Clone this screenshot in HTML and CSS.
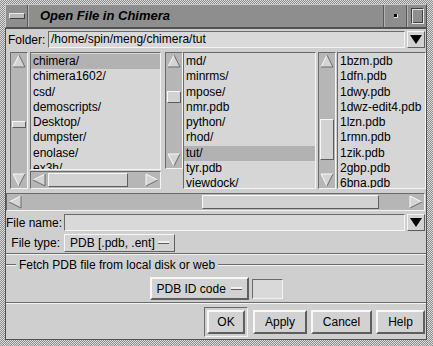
FILE: index.html
```html
<!DOCTYPE html>
<html>
<head>
<meta charset="utf-8">
<link rel="stylesheet" href="styles.css">
</head>
<body>
<div class="window">
  <div class="titlebar">
    <div class="tb menu"><span class="menubar"></span></div>
    <div class="title">Open File in Chimera</div>
    <div class="tb min"><span class="dot"></span></div>
    <div class="tb max"><span class="sq"></span></div>
  </div>
  <div class="dialog">
    <div class="row folder-row">
      <span class="lbl folder-lbl">Folder:</span>
      <div class="field">/home/spin/meng/chimera/tut</div>
      <div class="dropbtn"><span class="tri"></span></div>
    </div>

    <div class="lists">
      <div class="vscroll tall">
        <svg class="arr" width="14" height="14" viewBox="0 0 14 14"><polygon points="1,13 7,1 13,13" fill="#d4d4d4"/><path d="M1 13 L7 1" stroke="#fafafa" fill="none"/><path d="M7 1 L13 13 L1 13" stroke="#6a6a6a" fill="none"/></svg>
        <div class="track"><div class="thumb" style="margin-top:53px;height:7px"></div></div>
        <svg class="arr" width="14" height="14" viewBox="0 0 14 14"><polygon points="1,1 13,1 7,13" fill="#d4d4d4"/><path d="M1 1 L13 1 M1 1 L7 13" stroke="#fafafa" fill="none"/><path d="M13 1 L7 13" stroke="#6a6a6a" fill="none"/></svg>
      </div>
      <div class="leftcol">
        <div class="list left">
          <div class="item sel">chimera/</div>
          <div class="item">chimera1602/</div>
          <div class="item">csd/</div>
          <div class="item">demoscripts/</div>
          <div class="item">Desktop/</div>
          <div class="item">dumpster/</div>
          <div class="item">enolase/</div>
          <div class="item">ex3h/</div>
        </div>
        <div class="hscroll small">
          <svg class="arr" width="14" height="14" viewBox="0 0 14 14"><polygon points="13,1 13,13 1,7" fill="#d4d4d4"/><path d="M13 1 L1 7" stroke="#fafafa" fill="none"/><path d="M1 7 L13 13 L13 1" stroke="#6a6a6a" fill="none"/></svg>
          <div class="htrack"><div class="thumb" style="margin-left:2px;width:80px"></div></div>
          <svg class="arr" width="14" height="14" viewBox="0 0 14 14"><polygon points="1,1 13,7 1,13" fill="#d4d4d4"/><path d="M1 13 L1 1 L13 7" stroke="#fafafa" fill="none"/><path d="M13 7 L1 13" stroke="#6a6a6a" fill="none"/></svg>
        </div>
      </div>

      <div class="vscroll short">
        <svg class="arr" width="14" height="14" viewBox="0 0 14 14"><polygon points="1,13 7,1 13,13" fill="#d4d4d4"/><path d="M1 13 L7 1" stroke="#fafafa" fill="none"/><path d="M7 1 L13 13 L1 13" stroke="#6a6a6a" fill="none"/></svg>
        <div class="track"><div class="thumb" style="margin-top:23px;height:12px"></div></div>
        <svg class="arr" width="14" height="14" viewBox="0 0 14 14"><polygon points="1,1 13,1 7,13" fill="#d4d4d4"/><path d="M1 1 L13 1 M1 1 L7 13" stroke="#fafafa" fill="none"/><path d="M13 1 L7 13" stroke="#6a6a6a" fill="none"/></svg>
      </div>
      <div class="list mid">
        <div class="item">md/</div>
        <div class="item">minrms/</div>
        <div class="item">mpose/</div>
        <div class="item">nmr.pdb</div>
        <div class="item">python/</div>
        <div class="item">rhod/</div>
        <div class="item sel">tut/</div>
        <div class="item">tyr.pdb</div>
        <div class="item">viewdock/</div>
      </div>

      <div class="vscroll tall rightbar">
        <svg class="arr" width="14" height="14" viewBox="0 0 14 14"><polygon points="1,13 7,1 13,13" fill="#d4d4d4"/><path d="M1 13 L7 1" stroke="#fafafa" fill="none"/><path d="M7 1 L13 13 L1 13" stroke="#6a6a6a" fill="none"/></svg>
        <div class="track"><div class="thumb" style="margin-top:51px;height:41px"></div></div>
        <svg class="arr" width="14" height="14" viewBox="0 0 14 14"><polygon points="1,1 13,1 7,13" fill="#d4d4d4"/><path d="M1 1 L13 1 M1 1 L7 13" stroke="#fafafa" fill="none"/><path d="M13 1 L7 13" stroke="#6a6a6a" fill="none"/></svg>
      </div>
      <div class="list right">
        <div class="item">1bzm.pdb</div>
        <div class="item">1dfn.pdb</div>
        <div class="item">1dwy.pdb</div>
        <div class="item">1dwz-edit4.pdb</div>
        <div class="item">1lzn.pdb</div>
        <div class="item">1rmn.pdb</div>
        <div class="item">1zik.pdb</div>
        <div class="item">2gbp.pdb</div>
        <div class="item">6bna.pdb</div>
      </div>
    </div>

    <div class="hscroll big">
      <svg class="arr" width="14" height="14" viewBox="0 0 14 14"><polygon points="13,1 13,13 1,7" fill="#d4d4d4"/><path d="M13 1 L1 7" stroke="#fafafa" fill="none"/><path d="M1 7 L13 13 L13 1" stroke="#6a6a6a" fill="none"/></svg>
      <div class="htrack"><div class="thumb" style="margin-left:180px;width:177px"></div></div>
      <svg class="arr" width="14" height="14" viewBox="0 0 14 14"><polygon points="1,1 13,7 1,13" fill="#d4d4d4"/><path d="M1 13 L1 1 L13 7" stroke="#fafafa" fill="none"/><path d="M13 7 L1 13" stroke="#6a6a6a" fill="none"/></svg>
    </div>

    <div class="row name-row">
      <span class="lbl rlbl">File name:</span>
      <div class="field"></div>
      <div class="dropbtn"><span class="tri"></span></div>
    </div>
    <div class="row type-row">
      <span class="lbl rlbl">File type:</span>
      <div class="optbtn typebtn">PDB [.pdb, .ent]<span class="dash"></span></div>
    </div>

    <div class="sep"></div>

    <div class="fetch">
      <div class="fetch-head">
        <span class="line short-line"></span>
        <span class="fetch-title">Fetch PDB file from local disk or web</span>
        <span class="line grow-line"></span>
      </div>
      <div class="fetch-body">
        <div class="optbtn idbtn">PDB ID code<span class="dash"></span></div>
        <div class="field idfield"></div>
      </div>
    </div>

    <div class="buttons">
      <div class="defring"><div class="btn okbtn">OK</div></div>
      <div class="btn applybtn">Apply</div>
      <div class="btn cancelbtn">Cancel</div>
      <div class="btn helpbtn">Help</div>
    </div>
  </div>
</div>
</body>
</html>
```

FILE: styles.css
```css
html, body {
  margin: 0;
  padding: 0;
  background: #bdbdbd;
}

.window {
  width: 433px;
  height: 346px;
  box-sizing: border-box;
  padding: 4px 6px 6px 5px;
  background: repeating-conic-gradient(#8c8c8c 0 25%, #dcdcdc 0 50%) 0 0 / 2px 2px;
  display: flex;
  flex-direction: column;
  font-family: "Liberation Sans", Arial, sans-serif;
  font-size: 12px;
  color: #000;
}

/* ---------- title bar ---------- */
.titlebar {
  height: 24px;
  box-sizing: border-box;
  display: flex;
  background: #8e8e8e;
  border: 1px solid;
  border-color: #c8c8c8 #505050 #505050 #c8c8c8;
}

.tb {
  display: flex;
  align-items: center;
  justify-content: center;
  box-sizing: border-box;
}

.menu {
  width: 22px;
  border-right: 1px solid #5a5a5a;
  box-shadow: 1px 0 0 #b4b4b4;
}

.menubar {
  width: 14px;
  height: 4px;
  background: #b8b8b8;
  border: 1px solid;
  border-color: #e8e8e8 #404040 #404040 #e8e8e8;
}

.title {
  flex: 1;
  padding-left: 12px;
  font-weight: bold;
  font-style: italic;
  font-size: 13px;
  line-height: 22px;
  color: #000;
  border-right: 1px solid #5a5a5a;
  box-shadow: inset 1px 0 0 #b4b4b4;
}

.min {
  width: 23px;
  border-left: 1px solid #b4b4b4;
  border-right: 1px solid #5a5a5a;
}

.dot {
  width: 3px;
  height: 3px;
  background: #000;
  border-right: 1px solid #e0e0e0;
  border-bottom: 1px solid #e0e0e0;
}

.max {
  width: 19px;
  border-left: 1px solid #b4b4b4;
}

.sq {
  width: 11px;
  height: 14px;
  border: 1px solid;
  border-color: #404040 #e8e8e8 #e8e8e8 #404040;
  box-shadow: inset 1px 1px 0 #e0e0e0, inset -1px -1px 0 #404040;
}

/* ---------- dialog ---------- */
.dialog {
  flex: 1;
  background: #cfcfcf;
  border: 1px solid #505050;
  display: flex;
  flex-direction: column;
  box-sizing: border-box;
}

.row {
  display: flex;
  align-items: center;
}

.lbl {
  white-space: nowrap;
}

.field {
  box-sizing: border-box;
  background: #d9d9d9;
  border: 1px solid;
  border-color: #6a6a6a #f4f4f4 #f4f4f4 #6a6a6a;
  line-height: 15px;
  padding-left: 2px;
  white-space: nowrap;
}

.dropbtn {
  width: 18px;
  height: 17px;
  box-sizing: border-box;
  background: #d2d2d2;
  border: 1px solid;
  border-color: #f4f4f4 #5e5e5e #5e5e5e #f4f4f4;
  display: flex;
  align-items: center;
  justify-content: center;
  margin-left: 2px;
}

.tri {
  width: 0;
  height: 0;
  border-left: 6px solid transparent;
  border-right: 6px solid transparent;
  border-top: 9px solid #000;
}

.folder-row {
  margin-top: 1px;
  height: 19px;
  padding-left: 2px;
  padding-right: 1px;
}

.folder-lbl {
  width: 40px;
}

.folder-row .field {
  flex: 1;
  height: 17px;
}

/* ---------- lists ---------- */
.lists {
  margin-top: 3px;
  height: 137px;
  display: flex;
  padding-left: 4px;
}

.vscroll {
  width: 18px;
  box-sizing: border-box;
  background: #b6b6b6;
  border: 1px solid;
  border-color: #6a6a6a #f4f4f4 #f4f4f4 #6a6a6a;
  display: flex;
  flex-direction: column;
  align-items: center;
  padding: 1px 0;
}

.vscroll.tall {
  height: 137px;
}

.vscroll.short {
  height: 117px;
  margin-left: 4px;
}

.vscroll.rightbar {
  margin-left: 2px;
}

.arr {
  display: block;
  flex: none;
}

.track {
  flex: 1;
  width: 14px;
  display: flex;
  flex-direction: column;
}

.thumb {
  box-sizing: border-box;
  background: #d2d2d2;
  border: 1px solid;
  border-color: #f8f8f8 #5e5e5e #5e5e5e #f8f8f8;
  flex: none;
}

.track .thumb {
  width: 14px;
}

.hscroll {
  height: 18px;
  box-sizing: border-box;
  background: #b6b6b6;
  border: 1px solid;
  border-color: #6a6a6a #f4f4f4 #f4f4f4 #6a6a6a;
  display: flex;
  align-items: center;
  padding: 0 1px;
}

.htrack {
  flex: 1;
  height: 14px;
  display: flex;
}

.htrack .thumb {
  height: 14px;
}

.leftcol {
  width: 131px;
  margin-left: 2px;
  display: flex;
  flex-direction: column;
}

.list {
  box-sizing: border-box;
  background: #d6d6d6;
  border: 1px solid;
  border-color: #6a6a6a #f4f4f4 #f4f4f4 #6a6a6a;
  padding-top: 1px;
  overflow: hidden;
}

.list.left {
  height: 118px;
  margin-bottom: 1px;
}

.list.mid {
  width: 133px;
  height: 137px;
}

.list.right {
  width: 89px;
  height: 137px;
  margin-left: 1px;
}

.item {
  line-height: 15.25px;
  height: 15.25px;
  padding-left: 2px;
  white-space: nowrap;
}

.item.sel {
  background: #b2b2b2;
}

.hscroll.big {
  margin: 4px 1px 0 0;
}

/* ---------- file name / type ---------- */
.name-row {
  margin-top: 2px;
  height: 19px;
  padding-right: 1px;
}

.rlbl {
  width: 54px;
  text-align: right;
  margin-right: 4px;
}

.name-row .field {
  flex: 1;
  height: 17px;
}

.type-row {
  margin-top: 1px;
  height: 19px;
}

.optbtn {
  box-sizing: border-box;
  background: #d2d2d2;
  border: 1px solid;
  border-color: #f8f8f8 #5e5e5e #5e5e5e #f8f8f8;
  display: flex;
  align-items: center;
  white-space: nowrap;
}

.typebtn {
  width: 111px;
  height: 18px;
  padding-left: 5px;
}

.dash {
  display: block;
  width: 11px;
  height: 2px;
  background: #f0f0f0;
  border-bottom: 1px solid #5e5e5e;
  margin-left: auto;
  margin-right: 5px;
}

.sep {
  margin-top: 1px;
  height: 0;
  border-top: 1px solid #6a6a6a;
  border-bottom: 1px solid #f4f4f4;
}

/* ---------- fetch frame ---------- */
.fetch {
  height: 45px;
  box-sizing: border-box;
  margin-top: 3px;
  display: flex;
  flex-direction: column;
  border-bottom: 1px solid #6a6a6a;
}

.fetch-head {
  display: flex;
  align-items: center;
  height: 14px;
}

.line {
  display: block;
  height: 0;
  border-top: 1px solid #6a6a6a;
  border-bottom: 1px solid #f4f4f4;
}

.short-line {
  width: 10px;
}

.grow-line {
  flex: 1;
  margin-right: 2px;
}

.fetch-title {
  padding: 0 3px;
  white-space: nowrap;
}

.fetch-body {
  display: flex;
  justify-content: center;
  align-items: center;
  margin-top: 5px;
  gap: 3px;
}

.idbtn {
  width: 99px;
  height: 23px;
  padding-left: 5px;
  border-width: 2px;
  border-color: #f8f8f8 #5e5e5e #5e5e5e #f8f8f8;
}

.idfield {
  width: 31px;
  height: 20px;
}

/* ---------- buttons ---------- */
.buttons {
  flex: 1;
  border-top: 1px solid #f4f4f4;
  display: flex;
  justify-content: flex-end;
  align-items: center;
  gap: 4px;
  padding-right: 1px;
  padding-top: 1px;
}

.defring {
  padding: 2px;
  border: 1px solid;
  border-color: #6a6a6a #f4f4f4 #f4f4f4 #6a6a6a;
  margin-right: 1px;
}

.btn {
  box-sizing: border-box;
  height: 24px;
  background: #d2d2d2;
  border: 2px solid;
  border-color: #f8f8f8 #5e5e5e #5e5e5e #f8f8f8;
  display: flex;
  align-items: center;
  justify-content: center;
  font-size: 12px;
}

.okbtn { width: 38px; }
.applybtn { width: 54px; }
.cancelbtn { width: 61px; }
.helpbtn { width: 49px; }
```
